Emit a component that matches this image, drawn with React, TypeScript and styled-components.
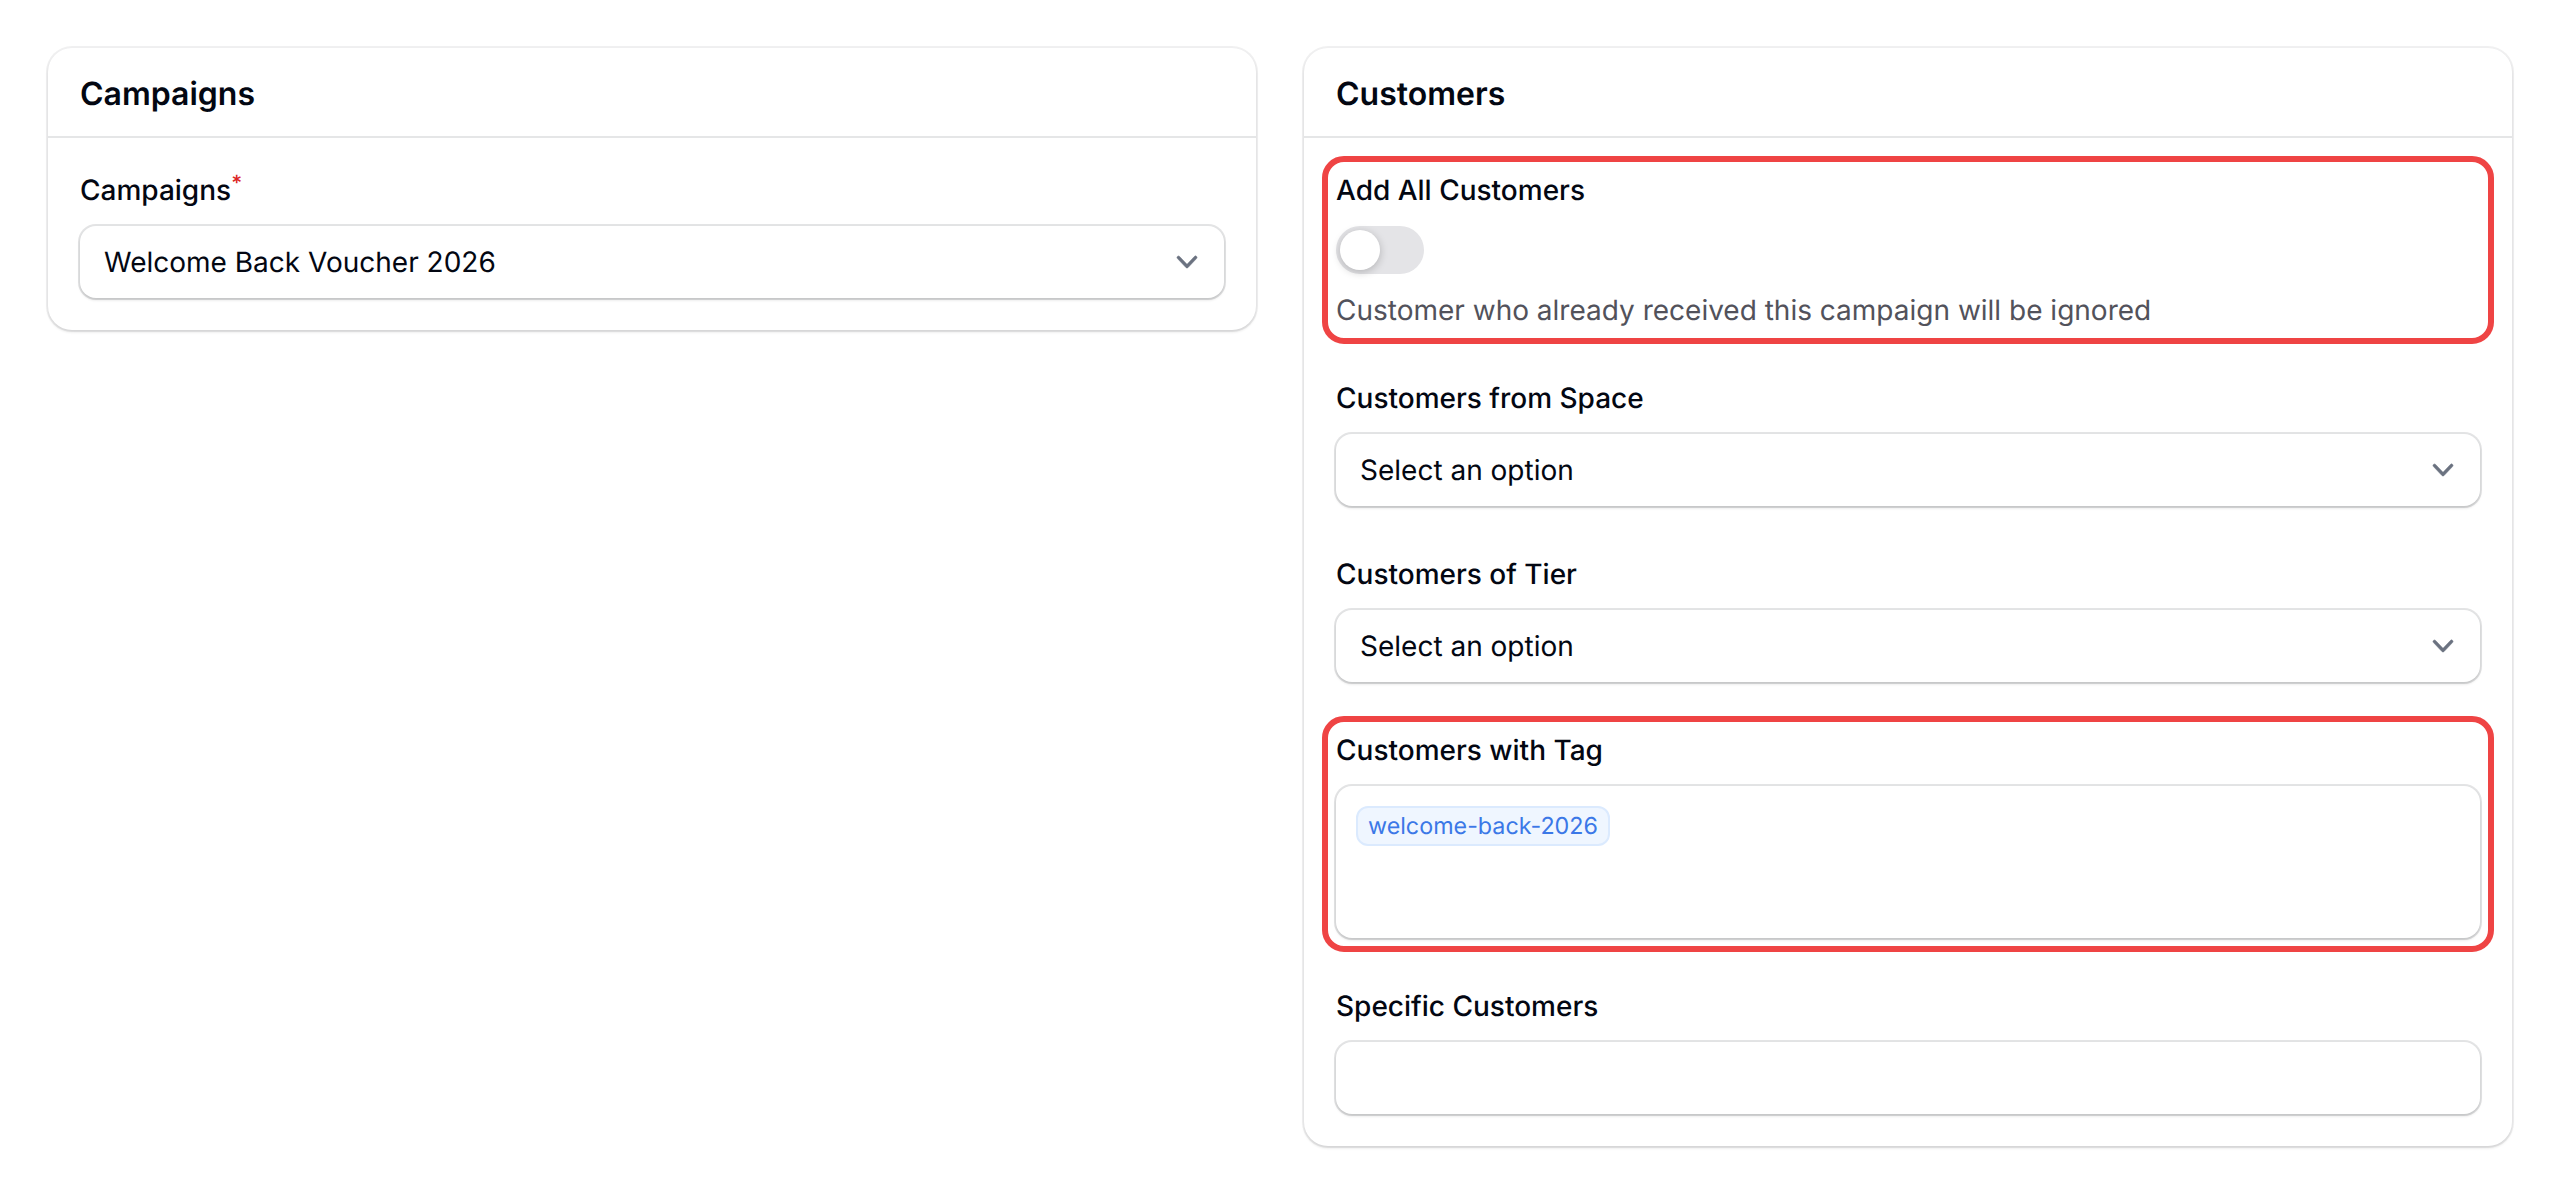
import styled, { createGlobalStyle } from 'styled-components'

const GlobalStyle = createGlobalStyle`
  html, body {
    margin: 0;
    background: #fff;
    font-family: Inter, 'Noto Sans', sans-serif;
    color: #030712;
    text-rendering: geometricPrecision;
  }
  * {
    box-sizing: border-box;
  }
`

const Page = styled.div`
  display: grid;
  grid-template-columns: 1fr 1fr;
  gap: 48px;
  align-items: start;
  padding: 48px;
`

const Card = styled.section`
  border-radius: 24px;
  background: #fff;
  box-shadow: 0 2px 3px rgba(0, 0, 0, 0.12), 0 0 0 2px rgba(3, 7, 18, 0.06);
`

const CardHeader = styled.header`
  display: flex;
  align-items: center;
  height: 90px;
  padding: 3px 32px 0;
  border-bottom: 2px solid rgba(3, 7, 18, 0.1);
`

const CardTitle = styled.h2`
  margin: 0;
  font-size: 32px;
  line-height: 48px;
  font-weight: 600;
  color: #030712;
`

const CardBody = styled.div`
  display: flex;
  flex-direction: column;
  gap: 48px;
  padding: 32px;
`

const Field = styled.div<{ $highlight?: boolean }>`
  display: flex;
  flex-direction: column;
  gap: 16px;
  border-radius: 8px;
  ${({ $highlight }) =>
    $highlight && 'outline: 6px solid #ef4444; outline-offset: 8px;'}
`

const Label = styled.label`
  font-size: 28px;
  line-height: 40px;
  font-weight: 500;
  color: #030712;
`

const Required = styled.sup`
  color: #dc2626;
  font-size: 21px;
  line-height: 0;
  font-weight: 500;
`

const Control = styled.div<{ $tall?: boolean }>`
  display: flex;
  align-items: ${({ $tall }) => ($tall ? 'flex-start' : 'center')};
  justify-content: space-between;
  height: ${({ $tall }) => ($tall ? '152px' : '72px')};
  padding: ${({ $tall }) => ($tall ? '20px' : '0 17px 0 24px')};
  border-radius: 16px;
  background: #fff;
  box-shadow: 0 2px 3px rgba(0, 0, 0, 0.14), 0 0 0 2px rgba(3, 7, 18, 0.11);
  font-size: 28px;
  line-height: 40px;
  color: #030712;
`

const Chevron = styled.svg`
  width: 40px;
  height: 40px;
  fill: #6b7280;
  stroke: #6b7280;
  stroke-width: 0.25;
  flex-shrink: 0;
`

const SwitchTrack = styled.div`
  display: flex;
  align-items: center;
  width: 88px;
  height: 48px;
  padding: 4px;
  border-radius: 24px;
  background: #e4e4e7;
`

const SwitchKnob = styled.span`
  width: 40px;
  height: 40px;
  border-radius: 50%;
  background: #fff;
  box-shadow: 0 2px 8px rgba(0, 0, 0, 0.22);
`

const HelpText = styled.p`
  margin: 0;
  font-size: 28px;
  line-height: 40px;
  color: #52525b;
`

const Tag = styled.span`
  display: inline-flex;
  align-items: center;
  height: 40px;
  padding: 0 10px;
  border: 2px solid #dbeafe;
  border-radius: 12px;
  background: #eff6ff;
  font-size: 23.3px;
  line-height: 32px;
  color: #3b78e7;
`

const SelectField = ({ label, value }: { label: string; value: string }) => (
  <Field>
    <Label>{label}</Label>
    <SelectBox value={value} />
  </Field>
)

const SelectBox = ({ value }: { value: string }) => (
  <Control>
    {value}
    <Chevron viewBox='0 0 20 20'>
      <path d='M5.23 7.21a.75.75 0 011.06.02L10 11.168l3.71-3.938a.75.75 0 111.08 1.04l-4.25 4.5a.75.75 0 01-1.08 0l-4.25-4.5a.75.75 0 01.02-1.06z' />
    </Chevron>
  </Control>
)

const App = () => {
  return (
    <>
      <GlobalStyle />
      <Page>
        <Card>
          <CardHeader>
            <CardTitle>Campaigns</CardTitle>
          </CardHeader>
          <CardBody>
            <Field>
              <Label>
                Campaigns<Required>*</Required>
              </Label>
              <SelectBox value='Welcome Back Voucher 2026' />
            </Field>
          </CardBody>
        </Card>

        <Card>
          <CardHeader>
            <CardTitle>Customers</CardTitle>
          </CardHeader>
          <CardBody>
            <Field $highlight>
              <Label>Add All Customers</Label>
              <SwitchTrack>
                <SwitchKnob />
              </SwitchTrack>
              <HelpText>Customer who already received this campaign will be ignored</HelpText>
            </Field>
            <SelectField label='Customers from Space' value='Select an option' />
            <SelectField label='Customers of Tier' value='Select an option' />
            <Field $highlight>
              <Label>Customers with Tag</Label>
              <Control $tall>
                <Tag>welcome-back-2026</Tag>
              </Control>
            </Field>
            <Field>
              <Label>Specific Customers</Label>
              <Control />
            </Field>
          </CardBody>
        </Card>
      </Page>
    </>
  )
}

export default App
